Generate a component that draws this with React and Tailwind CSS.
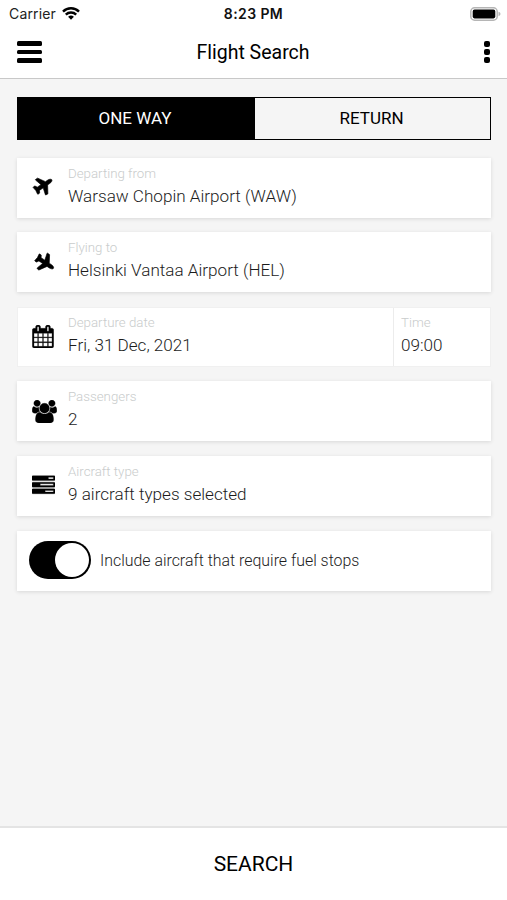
const PLANE =
  "M1568 160q44 52 12 148t-108 172l-161 161 160 696q5 19-12 33l-128 96q-7 6-19 6-4 0-7-1-15-3-21-16l-279-508-259 259 53 194q5 17-8 31l-96 96q-9 9-23 9h-2q-15-2-24-13l-189-252-252-189q-11-7-13-23-1-13 9-25l96-97q9-9 23-9 6 0 8 1l194 53 259-259-508-279q-14-8-17-24-2-16 9-27l128-128q14-13 30-8l665 159 160-160q76-76 172-108t148 12z";
const CALENDAR =
  "M192 1664h288v-288h-288v288zm352 0h320v-288h-320v288zm-352-352h288v-320h-288v320zm352 0h320v-320h-320v320zm-352-384h288v-288h-288v288zm736 736h320v-288h-320v288zm-384-736h320v-288h-320v288zm768 736h288v-288h-288v288zm-384-352h320v-320h-320v320zm-352-864v-288q0-13-9.5-22.5t-22.5-9.5h-64q-13 0-22.5 9.5t-9.5 22.5v288q0 13 9.5 22.5t22.5 9.5h64q13 0 22.5-9.5t9.5-22.5zm736 864h288v-320h-288v320zm-384-384h320v-288h-320v288zm384 0h288v-288h-288v288zm32-480v-288q0-13-9.5-22.5t-22.5-9.5h-64q-13 0-22.5 9.5t-9.5 22.5v288q0 13 9.5 22.5t22.5 9.5h64q13 0 22.5-9.5t9.5-22.5zm384-64v1280q0 52-38 90t-90 38h-1408q-52 0-90-38t-38-90v-1280q0-52 38-90t90-38h128v-96q0-66 47-113t113-47h64q66 0 113 47t47 113v96h384v-96q0-66 47-113t113-47h64q66 0 113 47t47 113v96h128q52 0 90 38t38 90z";
const USERS =
  "M529 896q-162 5-265 128h-134q-82 0-138-40.5t-56-118.5q0-353 124-353 6 0 43.5 21t97.5 42.5 119 21.5q67 0 133-23-5 37-5 66 0 139 81 256zm1071 637q0 120-73 189.5t-194 69.5h-874q-121 0-194-69.5t-73-189.5q0-53 3.5-103.5t14-109 26.5-108.5 43-97.5 62-81 85.5-53.5 111.5-20q10 0 43 21.5t73 48 107 48 135 21.5 135-21.5 107-48 73-48 43-21.5q61 0 111.5 20t85.5 53.5 62 81 43 97.5 26.5 108.5 14 109 3.5 103.5zm-1024-1277q0 106-75 181t-181 75-181-75-75-181 75-181 181-75 181 75 75 181zm704 384q0 159-112.5 271.5t-271.5 112.5-271.5-112.5-112.5-271.5 112.5-271.5 271.5-112.5 271.5 112.5 112.5 271.5zm576 225q0 78-56 118.5t-138 40.5h-134q-103-123-265-128 81-117 81-256 0-29-5-66 66 23 133 23 59 0 119-21.5t97.5-42.5 43.5-21q124 0 124 353zm-128-609q0 106-75 181t-181 75-181-75-75-181 75-181 181-75 181 75 75 181z";
const TASKS =
  "M1024 1408h640v-128h-640v128zm-384-512h1024v-128h-1024v128zm640-512h384v-128h-384v128zm512 832v256q0 26-19 45t-45 19h-1664q-26 0-45-19t-19-45v-256q0-26 19-45t45-19h1664q26 0 45 19t19 45zm0-512v256q0 26-19 45t-45 19h-1664q-26 0-45-19t-19-45v-256q0-26 19-45t45-19h1664q26 0 45 19t19 45zm0-512v256q0 26-19 45t-45 19h-1664q-26 0-45-19t-19-45v-256q0-26 19-45t45-19h1664q26 0 45 19t19 45z";

function Icon({ path, viewBox = "0 0 1792 1792", className }) {
  return (
    <svg viewBox={viewBox} className={className} fill="currentColor" stroke="currentColor" strokeLinejoin="round">
      <path d={path} />
    </svg>
  );
}

function StatusBar() {
  return (
    <div className="grid h-[26px] grid-cols-3 items-center pt-px pr-[6px] pl-[9px] font-[Inter,sans-serif] text-[14px]">
      <div className="flex items-center gap-1.5">
        <span className="tracking-[0.15px] text-[#222]">Carrier</span>
        <svg viewBox="0 0 18 13" className="h-[13px] w-[18px]" fill="none" stroke="black" strokeWidth="2.4">
          <path d="M1 4.6a11.3 11.3 0 0 1 16 0" />
          <path d="M3.8 7.6a7.4 7.4 0 0 1 10.4 0" />
          <path d="M6.1 9.8a4.2 4.2 0 0 1 5.8 0L9 12.8z" fill="black" stroke="none" />
        </svg>
      </div>
      <span className="pr-[3px] text-center font-semibold tracking-[0.4px] whitespace-nowrap text-[#111]">8:23 PM</span>
      <svg viewBox="0 0 31 14" className="h-[14px] w-[31px] justify-self-end">
        <rect x="0.8" y="0.8" width="26.4" height="12.4" rx="3.8" fill="white" stroke="#b5b5b5" strokeWidth="1.5" />
        <rect x="2.7" y="2.6" width="22.6" height="8.8" rx="1.8" />
        <path d="M28.5 4.8q2 .6 2 2.2t-2 2.2z" fill="#b5b5b5" />
      </svg>
    </div>
  );
}

function Header() {
  return (
    <header className="h-[79px] border-b border-[#c8c8c8] bg-white">
      <StatusBar />
      <div className="grid h-[52px] grid-cols-[1fr_auto_1fr] items-center pr-[17px] pl-[17px]">
        <button className="flex w-[25px] flex-col gap-1">
          <span className="h-[4.4px] rounded-[1.5px] bg-black" />
          <span className="h-[4.4px] rounded-[1.5px] bg-black" />
          <span className="h-[4.4px] rounded-[1.5px] bg-black" />
        </button>
        <h1 className="pt-[2px] pr-[1px] text-[19.5px]">Flight Search</h1>
        <button className="flex w-[6px] flex-col gap-[2px] justify-self-end pb-px">
          <span className="h-[6px] rounded-[2px] bg-black" />
          <span className="h-[6px] rounded-[2px] bg-black" />
          <span className="h-[6px] rounded-[2px] bg-black" />
        </button>
      </div>
    </header>
  );
}

function Field({ label, value }) {
  return (
    <div className="font-light">
      <p className="text-[13.3px] leading-[18px] text-[#c9cccc]">{label}</p>
      <p className="mt-px text-[17.1px] leading-[24px] text-[#1c1c1c]">{value}</p>
    </div>
  );
}

function Card({ icon, children }) {
  return (
    <div className="flex h-[60px] bg-white shadow-[0_1px_4px_rgba(0,0,0,0.12)]">
      <div className="flex w-[51px] shrink-0 items-center pl-[15px]">{icon}</div>
      <div className="flex-1 pt-[7px]">{children}</div>
    </div>
  );
}

function App() {
  return (
    <div className="flex h-[900px] w-[507px] flex-col overflow-hidden bg-[#f5f5f5] font-[Roboto,sans-serif] text-black">
      <Header />

      <main className="flex flex-1 flex-col gap-[14.6px] pt-[18px] pr-[16px] pl-[17px]">
        {/* Trip type */}
        <div className="mb-[3px] grid h-[43px] grid-cols-[237px_1fr] border border-black text-[17px]">
          <button className="bg-black pr-[3px] text-white">ONE WAY</button>
          <button className="pr-[2px]">RETURN</button>
        </div>

        <Card icon={<Icon path={PLANE} className="mb-[2px] -ml-px h-[22px] w-[22px] rotate-[11deg] stroke-[50]" />}>
          <Field label="Departing from" value="Warsaw Chopin Airport (WAW)" />
        </Card>
        <Card icon={<Icon path={PLANE} className="mb-px h-[22px] w-[22px] rotate-[79deg] stroke-[50]" />}>
          <Field label="Flying to" value="Helsinki Vantaa Airport (HEL)" />
        </Card>

        <div className="flex h-[60px] border border-[#f0f0f0] bg-white">
          <div className="flex w-[50px] shrink-0 items-center pl-[14px]">
            <Icon path={CALENDAR} viewBox="64 0 1664 1792" className="h-[23px] w-[22px] stroke-[24]" />
          </div>
          <div className="flex-1 pt-[6px]">
            <Field label="Departure date" value="Fri, 31 Dec, 2021" />
          </div>
          <div className="w-[97px] border-l border-[#ececec] pt-[6px] pl-[7px]">
            <Field label="Time" value="09:00" />
          </div>
        </div>

        <Card icon={<Icon path={USERS} viewBox="-64 0 1920 1792" className="h-[23px] w-[25px] stroke-[24]" />}>
          <Field label="Passengers" value="2" />
        </Card>
        <Card icon={<Icon path={TASKS} className="h-[23px] w-[23px] stroke-[24]" />}>
          <Field label="Aircraft type" value="9 aircraft types selected" />
        </Card>

        {/* Fuel stops */}
        <div className="flex h-[60px] items-center gap-[9px] bg-white pl-3 shadow-[0_1px_4px_rgba(0,0,0,0.12)]">
          <button className="mb-px flex h-[38px] w-[62px] items-center justify-end rounded-full bg-black pr-[2px]">
            <span className="h-[34px] w-[34px] rounded-full bg-white" />
          </button>
          <span className="text-[15.9px] font-light text-[#1c1c1c]">Include aircraft that require fuel stops</span>
        </div>
      </main>

      <button className="h-[74px] border-t-2 border-[#e4e4e4] bg-white pt-[2px] text-[21px]">SEARCH</button>
    </div>
  );
}

export default App;
